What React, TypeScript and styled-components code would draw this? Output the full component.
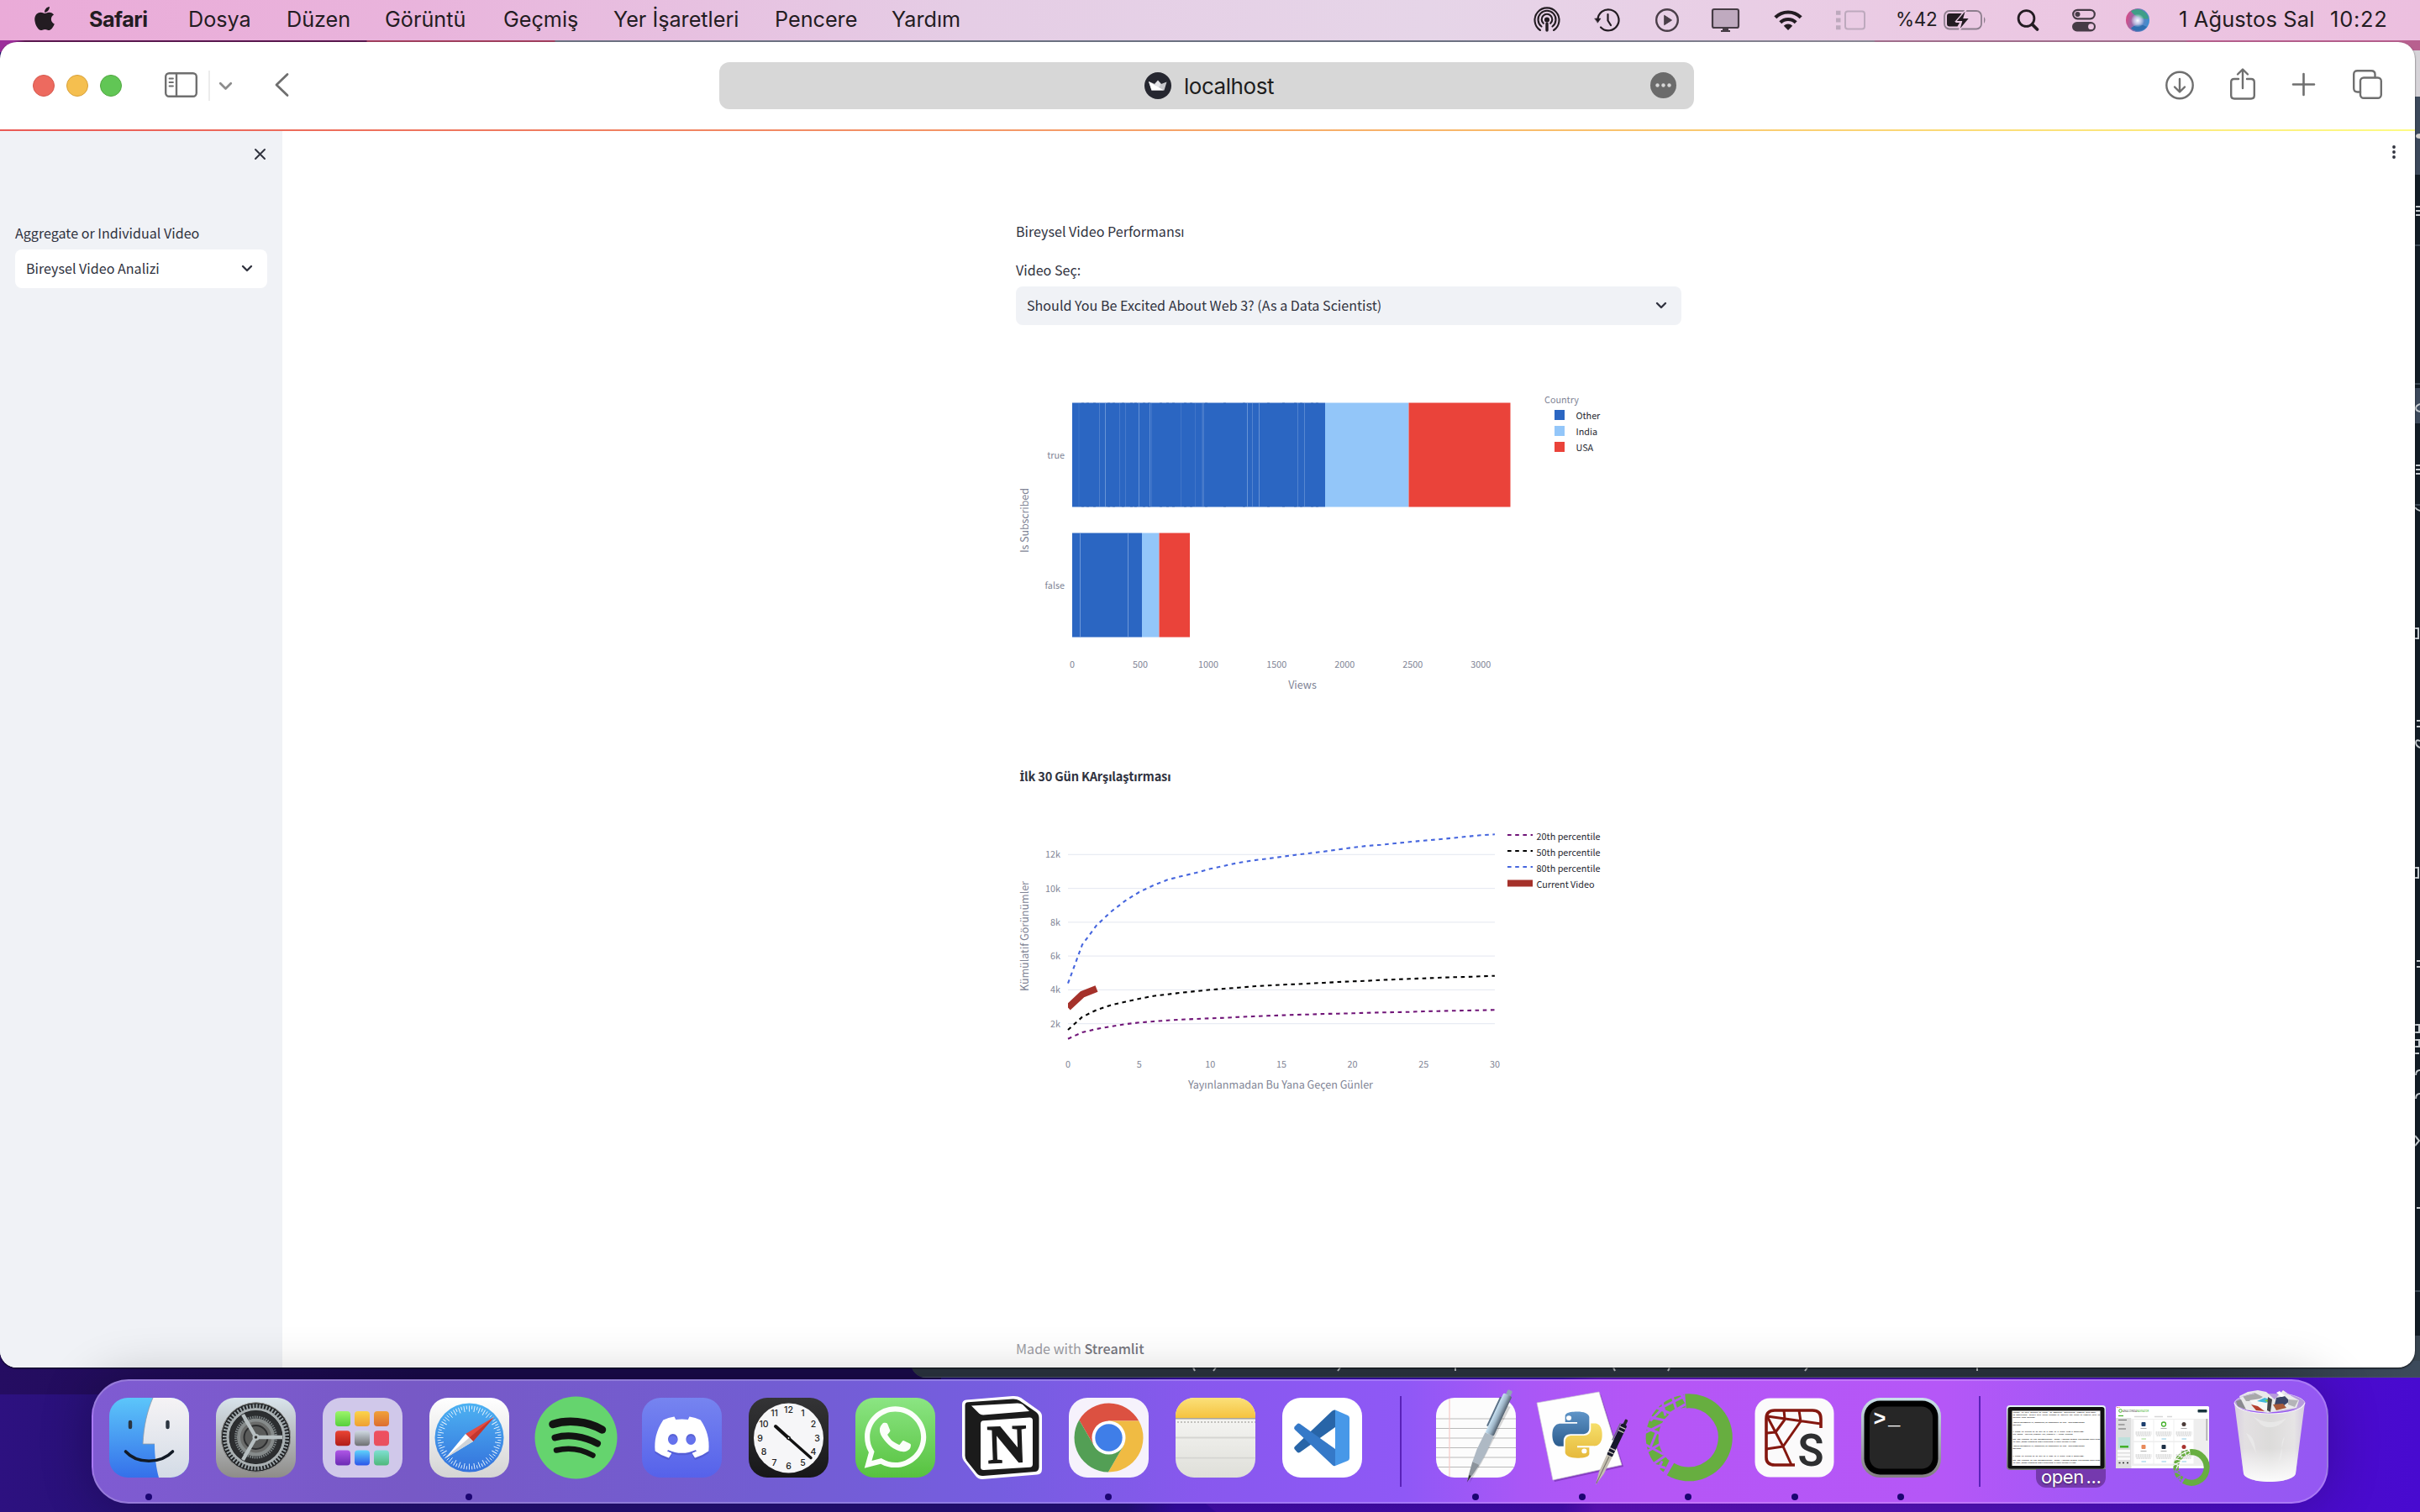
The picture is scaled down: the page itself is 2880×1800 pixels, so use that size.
import React from "react";
import styled, { createGlobalStyle } from "styled-components";
import { FaApple, FaDiscord, FaWhatsapp } from "react-icons/fa";

const sans = `"Noto Sans CJK JP", "Noto Sans", sans-serif`;
const system = `Inter, "Liberation Sans", sans-serif`;

const Global = createGlobalStyle`
  * { box-sizing: border-box; }
  html, body { margin: 0; padding: 0; }
  body { width: 2880px; height: 1800px; overflow: hidden; }
  svg { display: block; overflow: visible; flex-shrink: 0; }
`;

const Desktop = styled.div`
  position: relative;
  width: 2880px;
  height: 1800px;
  overflow: hidden;
  font-family: ${system};
  background:
    linear-gradient(40deg, transparent 0 49.9%, rgba(110, 20, 200, 0.25) 50% 66%, transparent 80%) 0 1786px / 2880px 14px no-repeat,
    linear-gradient(90deg, #2d1180 0, #231070 240px, #24107a 1340px, #350aa5 1400px, #360aa8 1860px, #5a10bc 1900px, #5212bc 2360px, #480ad0 2880px);
`;

/* ---------- menu bar ---------- */
const MenuBar = styled.header`
  position: relative;
  display: flex;
  height: 48px;
  padding-left: 37px;
  align-items: center;
  justify-content: space-between;
  color: #231c22;
  background: linear-gradient(90deg, #eaabd8 0, #e9b4dc 500px, #e5cde5 1150px, #e6d5e8 1700px, #ebc9e3 2350px, #ecbfdf 2880px);
`;
const MenuGroup = styled.nav`
  display: flex;
  align-items: center;
`;
const MenuItem = styled.span<{ $w: number; $bold?: boolean; $ls?: number }>`
  width: ${(p) => p.$w}px;
  font-size: 25.2px;
  line-height: 45px;
  height: 47px;
  white-space: nowrap;
  letter-spacing: ${(p) => p.$ls ?? 0}px;
  font-weight: ${(p) => (p.$bold ? 700 : 400)};
`;
const AppleSlot = styled.span`
  width: 69px;
  font-size: 32px;
  margin-top: -4px;
`;
const Tray = styled.div`
  display: flex;
  align-items: center;
  width: 1055px;
`;
const TrayItem = styled.div<{ $w: number }>`
  width: ${(p) => p.$w}px;
  flex-shrink: 0;
  height: 48px;
  display: flex;
  align-items: center;
`;
const TrayText = styled.span<{ $size: number; $ls?: number }>`
  font-size: ${(p) => p.$size}px;
  letter-spacing: ${(p) => p.$ls ?? 0}px;
  line-height: 46px;
  height: 48px;
  white-space: nowrap;
`;

/* ---------- windows ---------- */
const BackWindow = styled.div`
  position: absolute;
  left: 1084px;
  top: 60px;
  right: -40px;
  height: 1580px;
  border-radius: 18px;
  overflow: hidden;
  background: linear-gradient(180deg, #d6d3d8 0 55px, #3c495b 55px 148px, #121c25 148px 1530px, #37434f 1530px);
`;
const BackMarks = styled.svg`
  position: absolute;
  left: 1084px;
  top: 60px;
`;
const BackFoot = styled.div`
  position: absolute;
  left: 0;
  right: 0;
  bottom: 0;
  height: 20px;
  border-bottom: 1px solid #4a5260;
  background: linear-gradient(90deg, #2b3440 0, #2b343e 1500px, #3c4a5b 1790px);
`;
const TopEdge = styled.div`
  position: absolute;
  top: 48px;
  left: 0;
  right: 0;
  height: 14px;
  background: linear-gradient(90deg, #9c2d9a 0 16px, #5b1850 30px 436px, #a3405f 437px 660px, #6d7384 661px 1700px, #8e8a98 2230px, #a4708f 2232px 2600px, #b8608f 2604px);
`;
const NightShade = styled.div`
  position: absolute;
  top: 1600px;
  left: 0;
  width: 1120px;
  height: 60px;
  background: linear-gradient(90deg, #250d62, #190a4a 500px);
`;
const Window = styled.section`
  position: absolute;
  left: 0;
  top: 50px;
  width: 2874px;
  height: 1578px;
  border-radius: 20px;
  overflow: hidden;
  background: #fff;
  display: flex;
  flex-direction: column;
  box-shadow: 0 1px 2px rgba(0, 0, 0, 0.8);
`;
const Toolbar = styled.div`
  height: 104px;
  flex-shrink: 0;
  display: grid;
  grid-template-columns: 856px 1160px 1fr;
  align-items: center;
  color: #6f6f6f;
`;
const ToolLeft = styled.div`
  display: flex;
  align-items: center;
  padding-left: 39px;
`;
const Lights = styled.div`
  display: flex;
  gap: 14px;
  margin-right: 51px;
`;
const Light = styled.i<{ $c: string; $b: string }>`
  width: 26px;
  height: 26px;
  border-radius: 50%;
  background: ${(p) => p.$c};
  border: 1px solid ${(p) => p.$b};
`;
const ToolDivider = styled.i`
  width: 2px;
  height: 36px;
  background: #ececec;
  margin: 0 11px 0 13px;
`;
const Address = styled.div`
  height: 56px;
  border-radius: 12px;
  background: #d7d7d7;
  display: grid;
  grid-template-columns: 1fr auto 1fr;
  align-items: center;
  color: #1d1d1d;
`;
const Host = styled.div`
  display: flex;
  align-items: center;
  gap: 15px;
  grid-column: 2;
  padding-left: 6px;
  font-size: 26px;
  line-height: 55px;
  letter-spacing: -0.45px;
`;
const More = styled.span`
  justify-self: end;
  margin-right: 21px;
`;
const ToolRight = styled.div`
  display: flex;
  justify-content: flex-end;
  align-items: center;
  padding-right: 39px;
`;
const ToolIcon = styled.span<{ $ml: number }>`
  margin-left: ${(p) => p.$ml}px;
`;
const Rainbow = styled.div`
  height: 2px;
  flex-shrink: 0;
  background: linear-gradient(90deg, #ea5a56, #f49a68 43%, #f8ba6a 62%, #fdfb84);
`;
const Page = styled.div`
  flex: 1;
  display: grid;
  grid-template-columns: 336px 1fr;
  font-family: ${sans};
  color: #31333f;
`;
const Sidebar = styled.aside`
  background: #f0f2f6;
  padding: 0 18px;
  display: flex;
  flex-direction: column;
`;
const CloseRow = styled.div`
  display: flex;
  justify-content: flex-end;
  padding: 21px 2px 0 0;
  height: 105px;
`;
const Label = styled.label<{ $h: number; $gap: number }>`
  display: block;
  font-size: 16.1px;
  line-height: ${(p) => p.$h}px;
  height: ${(p) => p.$h}px;
  margin-bottom: ${(p) => p.$gap}px;
  white-space: nowrap;
`;
const Select = styled.div<{ $bg: string; $pr: number }>`
  height: 46px;
  border-radius: 8px;
  background: ${(p) => p.$bg};
  display: flex;
  align-items: center;
  justify-content: space-between;
  padding: 0 ${(p) => p.$pr}px 1px 13px;
  font-size: 16.1px;
  line-height: 45px;
  white-space: nowrap;
`;
const Main = styled.main`
  display: grid;
  grid-template-columns: 873px 792px 1fr;
`;
const Column = styled.div`
  grid-column: 2;
  display: flex;
  flex-direction: column;
  padding-top: 105px;
`;
const ChartSlot = styled.figure<{ $mt: number }>`
  margin: ${(p) => p.$mt}px 0 0;
`;
const Kebab = styled.div`
  justify-self: end;
  padding: 17px 22px 0 0;
`;
const Footer = styled.footer`
  margin-top: auto;
  height: 45px;
  font-size: 16.1px;
  line-height: 45px;
  color: #9c9ca3;
  white-space: nowrap;
  b { font-weight: 500; color: #77777f; }
`;

/* ---------- dock ---------- */
const Dock = styled.div`
  position: absolute;
  left: 109px;
  top: 1642px;
  width: 2662px;
  height: 148px;
  border-radius: 44px;
  display: flex;
  padding: 0 0 0 3px;
  border: 2px solid rgba(255, 255, 255, 0.2);
  background: linear-gradient(90deg, #7f5bd2 0, #7759c6 380px, #725dd2 800px, #765de0 1080px, #8858ee 1320px, #8f58f6 1560px, #a957f6 1700px, #b556f6 1850px, #b557f7 2200px, #a058f6 2400px, #9458f2 2662px);
  box-shadow: 0 0 62px rgba(0, 0, 0, 0.24);
`;
const DockItem = styled.div<{ $w: number; $top?: number }>`
  width: ${(p) => p.$w}px;
  flex-shrink: 0;
  display: flex;
  flex-direction: column;
  align-items: center;
  padding-top: ${(p) => p.$top ?? 19.5}px;
`;
const Dot = styled.i`
  width: 8px;
  height: 8px;
  border-radius: 50%;
  background: #1c0572;
  margin-top: 19px;
`;
const DockRule = styled.i<{ $w: number; $x: number }>`
  width: ${(p) => p.$w}px;
  flex-shrink: 0;
  margin-top: 18px;
  height: 108px;
  background: linear-gradient(#5a22b8, #5a22b8) ${(p) => p.$x}px 0 / 2px 108px no-repeat;
`;
const Tag = styled.span`
  margin-top: -1px;
  margin-left: 36px;
  width: 83px;
  height: 22px;
  border-radius: 0 0 12px 12px;
  background: #7539ae;
  color: #fff;
  font-size: 22px;
  line-height: 19px;
  text-align: center;
  letter-spacing: -0.4px;
  word-spacing: -3px;
  text-shadow: 0 1px 2px rgba(0, 0, 0, 0.5);
`;

const Chevron = ({ w = 12, c = "#31333f", s = 2.4 }: { w?: number; c?: string; s?: number }) => (
  <svg width={w} height={w * 0.6} viewBox="0 0 12 7.2" fill="none" stroke={c} strokeWidth={s} strokeLinecap="round" strokeLinejoin="round">
    <path d="M1 1 6 6 11 1" />
  </svg>
);
const BackIcon = styled.svg`
  margin: -2px 0 0 51px;
`;
const Raised = styled.svg<{ $by: number }>`
  margin-top: -${(p) => p.$by}px;
`;

/* ---------- charts ---------- */
const Tick = styled.text`
  font-family: ${sans};
  font-size: 10.8px;
  fill: #808495;
`;
const AxisTitle = styled.text`
  font-family: ${sans};
  font-size: 12.6px;
  fill: #808495;
`;
const LegendText = styled.text`
  font-family: ${sans};
  font-size: 10.8px;
  fill: #262730;
`;
const ChartTitle = styled.text`
  font-family: ${sans};
  font-size: 14.6px;
  font-weight: 700;
  fill: #31333f;
`;
const DottedCapital = styled.tspan`
  font-family: "Noto Sans", sans-serif;
`;

const stripes = [
  [1284, 0.15], [1308.5, 0.3], [1315.5, 0.55], [1332.5, 0.25], [1339.5, 0.25], [1355.5, 0.55], [1368.5, 0.5], [1370.5, 0.2],
  [1405.5, 0.2], [1422.5, 0.2], [1432, 0.5], [1430.5, 0.15], [1484.5, 0.55], [1490.5, 0.35], [1498.5, 0.55], [1544.5, 0.35], [1552.5, 0.4],
];
const fringe = [1287, 1293, 1301, 1318, 1324, 1335, 1345, 1350, 1360, 1366, 1380, 1388, 1395, 1409, 1416, 1434, 1456, 1479, 1508, 1526, 1540, 1547, 1560, 1566];

const BarChart = () => (
  <svg width={792} height={470} viewBox="1209 400 792 470">
    <g fill="#2b66c2">
      <rect x={1276} y={479.5} width={301} height={124} />
      <rect x={1276} y={634.5} width={83} height={124} />
    </g>
    {stripes.map(([x, o]) => (
      <rect key={x} x={x - 0.5} y={480} width={1} height={123} fill="#9bb9e6" opacity={o} />
    ))}
    {fringe.map((x) => (
      <path key={x} d={`M${x} 479.8h3M${x} 603.2h3`} stroke="#1c4f9f" strokeWidth={0.8} opacity={0.5} />
    ))}
    {[1285.5, 1342.5].map((x) => (
      <rect key={x} x={x - 0.5} y={635} width={1} height={123} fill="#9bb9e6" opacity={0.6} />
    ))}
    <g fill="#93c6f9">
      <rect x={1577} y={479.5} width={99.5} height={124} />
      <rect x={1359} y={634.5} width={20.5} height={124} />
    </g>
    <g fill="#ea433a">
      <rect x={1676.5} y={479.5} width={121} height={124} />
      <rect x={1379.5} y={634.5} width={36.5} height={124} />
    </g>
    {[0, 500, 1000, 1500, 2000, 2500, 3000].map((v) => (
      <Tick key={v} x={1276 + v * 0.1621} y={795} textAnchor="middle">{v}</Tick>
    ))}
    <Tick x={1267} y={546} textAnchor="end">true</Tick>
    <Tick x={1267} y={701} textAnchor="end">false</Tick>
    <AxisTitle x={1550} y={820} textAnchor="middle">Views</AxisTitle>
    <AxisTitle transform="translate(1223.5 619.5) rotate(-90)" textAnchor="middle" textLength={77}>Is Subscribed</AxisTitle>
    <Tick x={1838} y={480}>Country</Tick>
    {[["Other", "#2b66c2"], ["India", "#93c6f9"], ["USA", "#ea433a"]].map(([t, c], i) => (
      <g key={t}>
        <rect x={1850} y={488 + i * 19} width={12} height={12} fill={c} />
        <LegendText x={1875.5} y={499 + i * 19}>{t}</LegendText>
      </g>
    ))}
  </svg>
);

const curve80 = [872, 734, 665, 617, 578, 546, 522, 502, 489, 477, 463, 452, 441, 433, 427, 420, 413, 407, 401, 394, 387, 381, 377, 372, 367, 362, 358, 353, 348, 343, 340];
const curve50 = [1038, 992, 967, 950, 938, 927, 917, 911, 905, 900, 895, 891, 887, 883, 880, 877, 875, 872, 870, 867, 865, 863, 860, 858, 856, 854, 852, 850, 849, 847, 845];
const curve20 = [1070, 1047, 1035, 1026, 1018, 1012, 1008, 1004, 1001, 999, 997, 995, 992, 990, 988, 986, 984, 983, 981, 980, 979, 977, 976, 975, 974, 972, 971, 970, 969, 968, 967];
const toPath = (ys: number[]) => ys.map((y, i) => `${i ? "L" : "M"}${(1271 + i * 16.93).toFixed(1)} ${(880 + y / 3).toFixed(1)}`).join("");
const series = [
  { name: "20th percentile", color: "#701578", ys: curve20 },
  { name: "50th percentile", color: "#000000", ys: curve50 },
  { name: "80th percentile", color: "#4666de", ys: curve80 },
];

const LineChart = () => (
  <svg width={792} height={440} viewBox="1209 880 792 440">
    <defs>
      <clipPath id="plot"><rect x={1271} y={960} width={508} height={300} /></clipPath>
    </defs>
    <ChartTitle x={1213.5} y={930} textLength={180}><DottedCapital>İ</DottedCapital>lk 30 Gün KArşılaştırması</ChartTitle>
    {[2, 4, 6, 8, 10, 12].map((k) => (
      <g key={k}>
        <rect x={1271} y={1258.3 - k * 20.13} width={508} height={1.2} fill="#e8ebf3" />
        <Tick x={1262} y={1263 - k * 20.13} textAnchor="end">{k}k</Tick>
      </g>
    ))}
    {[0, 5, 10, 15, 20, 25, 30].map((d) => (
      <Tick key={d} x={1271 + d * 16.93} y={1270.7} textAnchor="middle">{d}</Tick>
    ))}
    {series.map((s, i) => (
      <g key={s.name} fill="none" stroke={s.color} strokeWidth={2.1}>
        <path d={toPath(s.ys)} strokeDasharray="4.6 4.6" />
        <path d={`M1794 ${994 + i * 19}h30`} strokeDasharray="4.6 4.6" />
        <LegendText x={1828.5} y={1000 + i * 19} stroke="none" textLength={76}>{s.name}</LegendText>
      </g>
    ))}
    <g stroke="#a5312a" strokeWidth={8} fill="none">
      <path d="M1271 1199.6 1288 1183.8 1305 1177" clipPath="url(#plot)" />
      <path d="M1794 1051.5h30" />
    </g>
    <LegendText x={1828.5} y={1057} textLength={69}>Current Video</LegendText>
    <AxisTitle x={1524} y={1295.7} textAnchor="middle" textLength={220}>Yayınlanmadan Bu Yana Geçen Günler</AxisTitle>
    <AxisTitle transform="translate(1223.5 1114.5) rotate(-90)" textAnchor="middle" textLength={131}>Kümülatif Görünümler</AxisTitle>
  </svg>
);

/* ---------- dock icons, 95x95 each ---------- */
const Icon = ({ children }: { children: React.ReactNode }) => (
  <svg width={95} height={95} viewBox="0 0 95 95">{children}</svg>
);
const Grad = ({ id, a, b }: { id: string; a: string; b: string }) => (
  <linearGradient id={id} x1="0" y1="0" x2="0" y2="1">
    <stop offset="0" stopColor={a} />
    <stop offset="1" stopColor={b} />
  </linearGradient>
);
const Tile = ({ fill }: { fill: string }) => <rect width={95} height={95} rx={22} fill={fill} />;

const Finder = () => (
  <Icon>
    <defs>
      <Grad id="fa" a="#5cc6fa" b="#3570ea" />
      <Grad id="fb" a="#f5f3f5" b="#d3dbe6" />
      <clipPath id="fc"><rect width={95} height={95} rx={22} /></clipPath>
    </defs>
    <g clipPath="url(#fc)">
      <rect width={95} height={95} fill="url(#fa)" />
      <path d="M52 0C45 16 41 34 40 55H54C54 70 56 84 59 95H95V0Z" fill="url(#fb)" />
    </g>
    <path d="M52 0C45 16 41 34 40 55H54" fill="none" stroke="#8d9ba8" strokeWidth={0.8} />
    <path d="M25 29v6M69.5 29v6" stroke="#2b3540" strokeWidth={4.4} strokeLinecap="round" />
    <path d="M19.5 64C33 79 61 79 75.5 64" fill="none" stroke="#121a26" strokeWidth={3.6} strokeLinecap="round" />
  </Icon>
);
const Settings = () => (
  <Icon>
    <defs><Grad id="sa" a="#d9e4ec" b="#8e8c89" /></defs>
    <Tile fill="url(#sa)" />
    <circle cx={47.5} cy={47} r={41.5} fill="#202224" />
    <circle cx={47.5} cy={47} r={37} fill="none" stroke="#9aa3a7" strokeWidth={5} strokeDasharray="1.9 1.97" />
    <circle cx={47.5} cy={47} r={33.5} fill="none" stroke="#a9b0b2" strokeWidth={3.2} />
    <circle cx={47.5} cy={47} r={41.2} fill="none" stroke="#a8a8a6" strokeWidth={0.8} />
    <circle cx={47.5} cy={47} r={31.5} fill="#2c2e30" />
    <circle cx={47.5} cy={47} r={24} fill="none" stroke="#7d8486" strokeWidth={3} strokeDasharray="1.5 1.2" />
    <circle cx={47.5} cy={47} r={20.5} fill="#6a6b6a" stroke="#868b8b" strokeWidth={4} />
    <circle cx={47.5} cy={47} r={14} fill="#5a5b5a" stroke="#2c2d2e" strokeWidth={2} />
    <path d="M47.5 47H79M47.5 47 32 20M47.5 47 32 74" stroke="#b7bfc1" strokeWidth={4.4} />
    <circle cx={47.5} cy={47} r={4} fill="#b7bfc1" />
    <circle cx={47.5} cy={47} r={1.8} fill="#333" />
  </Icon>
);
const pads = [["#9cf56a", "#56cf3c"], ["#fbd44a", "#ef9f31"], ["#f0a13a", "#dc6d30"], ["#ea4434", "#b01d18"], ["#cfd9e2", "#6e6f72"], ["#ef4f60", "#e8505f"], ["#b057e6", "#6b2bb4"], ["#5fd4fb", "#2b55ea"], ["#7fe0d2", "#4fb87c"]];
const Launchpad = () => (
  <Icon>
    <Tile fill="#d0c8ea" />
    {pads.map(([a, b], i) => (
      <g key={i}>
        <defs><Grad id={`lp${i}`} a={a} b={b} /></defs>
        <rect x={15 + (i % 3) * 23} y={16 + Math.floor(i / 3) * 23.2} width={18} height={18} rx={4} fill={`url(#lp${i})`} />
      </g>
    ))}
  </Icon>
);
const Safari = () => (
  <Icon>
    <defs><Grad id="sfa" a="#ffffff" b="#d4d4d4" /><Grad id="sfb" a="#4db2f2" b="#3472dc" /></defs>
    <Tile fill="url(#sfa)" />
    <circle cx={47.5} cy={47.5} r={41} fill="url(#sfb)" />
    {Array.from({ length: 72 }, (_, i) => (
      <path key={i} d={i % 2 ? "M47.5 9.5v4" : "M47.5 9.5v7"} stroke="#e6f2fd" strokeWidth={0.9} transform={`rotate(${i * 5} 47.5 47.5)`} />
    ))}
    <path d="M77 23 43 43 52 52Z" fill="#e24b41" />
    <path d="M77 23 47.5 47.5 52 52Z" fill="#c2372f" />
    <path d="M19 72 43 43 52 52Z" fill="#fff" />
    <path d="M19 72 47.5 47.5 52 52Z" fill="#cfd3d8" />
  </Icon>
);
const Spotify = () => (
  <Icon>
    <circle cx={47.5} cy={47.5} r={49} fill="#65d46e" />
    <g fill="none" stroke="#121412" strokeLinecap="round">
      <path d="M20 31.500C37 26 61 27.500 78.500 38" strokeWidth={9.500} />
      <path d="M22.500 47.500C38 43 57 45.500 73 54.500" strokeWidth={8} />
      <path d="M24 62.500C38 59 53 60.500 67.500 68.500" strokeWidth={6.500} />
    </g>
  </Icon>
);
const Discord = () => (
  <Icon>
    <defs><Grad id="da" a="#7684f0" b="#5662ea" /></defs>
    <Tile fill="url(#da)" />
    <FaDiscord x={12.5} y={14.5} size={70} color="rgba(50,50,150,.25)" />
    <FaDiscord x={12.5} y={12} size={70} color="#fff" />
  </Icon>
);
const Clock = () => (
  <Icon>
    <defs><Grad id="ca" a="#343436" b="#171719" /></defs>
    <Tile fill="url(#ca)" />
    <circle cx={47.5} cy={48} r={41.5} fill="#f6f6f8" />
    {Array.from({ length: 12 }, (_, i) => {
      const a = ((i + 1) * Math.PI) / 6;
      return (
        <text key={i} x={47.5 + 34 * Math.sin(a)} y={51.5 - 33.5 * Math.cos(a)} fontSize={10.5} fontWeight={500} fontFamily="Inter, sans-serif" textAnchor="middle" fill="#222">{i + 1}</text>
      );
    })}
    <path d="M32 34 47.5 48" stroke="#111" strokeWidth={4} strokeLinecap="round" />
    <path d="M47.5 48 74 71.5" stroke="#111" strokeWidth={3.4} strokeLinecap="round" />
    <circle cx={47.5} cy={48} r={2.4} fill="#111" />
    <circle cx={47.5} cy={48} r={0.9} fill="#fff" />
  </Icon>
);
const WhatsApp = () => (
  <Icon>
    <defs><Grad id="wa" a="#8be583" b="#57c23f" /></defs>
    <Tile fill="url(#wa)" />
    <FaWhatsapp x={5.5} y={5} size={84} color="#fbfffa" />
  </Icon>
);
const Notion = () => (
  <Icon>
    <path d="M0 8Q0 3 5 2.500L60-2Q66-2.500 70 0L91 15Q95 18 95 22V85Q95 91 89 91.500L24 97Q19 97 16 93L2 75Q0 72 0 69Z" fill="#fff" />
    <path d="M3.500 9Q3.500 5.500 7 5.200L60 1.500Q65 1.200 68 3.300L88 17Q91.500 19.500 91.500 24V82Q91.500 87.500 87 88L25 93Q20 93.300 17.500 90L5.500 75Q3.500 72 3.500 69Z" fill="#1b1b1b" />
    <path d="M11 9.500 66 6.500Q70 6.500 72 8L80 16 25 20.500Q22 20.500 20 18.500Z" fill="#fff" />
    <path d="M22 31Q22 27.500 25.500 27.200L80 23.500Q84 23.200 84 27V79Q84 82.500 80.500 82.800L26 86Q22 86.200 22 82.500Z" fill="#fff" />
    <text x={53.5} y={77} transform="rotate(-2 53 55)" fontSize={65} fontWeight={700} fontFamily="Liberation Serif, serif" textAnchor="middle" fill="#1b1b1b" stroke="#1b1b1b" strokeWidth={1.4}>N</text>
  </Icon>
);
const Chrome = () => (
  <Icon>
    <Tile fill="#f6f2fc" />
    <g transform="translate(47.5 47.5)">
      <path d="M0 0-17.3 10-35.200-21A41 41 0 0 1 35.800-20H0Z" fill="#dc5141" />
      <path d="M0 0V-20H35.800A41 41 0 0 1-.6 41L17.300 10Z" fill="#f0bb43" />
      <path d="M0 0 17.300 10-.6 41A41 41 0 0 1-35.200-21L-17.300 10Z" fill="#539f55" />
      <circle r={20} fill="#fff" />
      <circle r={16.2} fill="#3f7ee8" />
    </g>
  </Icon>
);
const Notes = () => (
  <Icon>
    <defs>
      <Grad id="na" a="#fbe07a" b="#f5c33f" />
      <Grad id="nb" a="#fbfbfa" b="#dfdfd9" />
      <clipPath id="nc"><rect width={95} height={95} rx={22} /></clipPath>
    </defs>
    <g clipPath="url(#nc)">
      <rect width={95} height={95} fill="url(#nb)" />
      <rect width={95} height={24} fill="url(#na)" />
      <path d="M0 24.8H95" stroke="#a8a49a" strokeWidth={1.6} />
      <path d="M2 29H95" stroke="#c2c1bd" strokeWidth={2} strokeDasharray="2 2" />
      <path d="M0 47.5H95M0 71.7H95" stroke="#d5d5d2" strokeWidth={1.8} />
    </g>
  </Icon>
);
const VSCode = () => (
  <Icon>
    <Tile fill="#fff" />
    <path d="M14.5 61Q13.5 59.5 15 58L59 16Q61 14 63 14.5V35L21 65Q19 66 17.5 64.5Z" fill="#2865a8" />
    <path d="M14.5 34.5 17.5 31.5Q19 30 21 31L63 61V81Q61 82 59 79.5L15 38Q13.5 36.5 14.5 34.5Z" fill="#3579c8" />
    <path d="M63 14.5 78 21Q80 22 80 24V72Q80 74 78 75L63 81Z" fill="#4798e8" />
  </Icon>
);
const TextEdit = () => (
  <Icon>
    <defs>
      <clipPath id="tc"><rect width={95} height={95} rx={22} /></clipPath>
      <linearGradient id="tp" x1="0" x2="1"><stop offset="0" stopColor="#c9e3f4" /><stop offset=".5" stopColor="#9db4c6" /><stop offset="1" stopColor="#4f5d6b" /></linearGradient>
    </defs>
    <Tile fill="#fcfcfc" />
    <g clipPath="url(#tc)">
      <path d="M0 25H95M0 36.5H95M0 48H95M0 59.5H95M0 71H95M0 82.5H95" stroke="#b9b9b9" strokeWidth={1.2} />
      <path d="M16 0V95" stroke="#f6c9c7" strokeWidth={1.2} />
    </g>
    <g transform="translate(88 -9) rotate(25)">
      <path d="M-5 16-3 90 0 119 3 90 6 16Z" fill="rgba(0,0,0,.15)" transform="translate(3 2)" />
      <rect x={-2.5} y={0} width={6} height={9} rx={1.5} fill="#8fa5b7" />
      <rect x={-5.5} y={6} width={11} height={52} rx={2} fill="url(#tp)" />
      <path d="M-6.5 12V50" stroke="#5a7187" strokeWidth={2} />
      <path d="M-5.5 58H5.5L6 80 4.5 96H-4.5L-6 80Z" fill="#aeb9c4" />
      <path d="M-4.5 96H4.5L1 118H-1Z" fill="#8c949c" />
      <path d="M-1 112H1L0 121Z" fill="#222" />
    </g>
  </Icon>
);
const PythonLauncher = () => (
  <Icon>
    <defs><Grad id="pa" a="#5f95c8" b="#2c5c8e" /><Grad id="pb" a="#f6df6a" b="#e6b93c" /></defs>
    <path d="M-4.5 9 70-4 97 82 15 100Z" fill="rgba(40,0,80,.3)" />
    <path d="M-6 6 68-7 95 80 13 98Z" fill="#fefefe" stroke="#c9c6d0" strokeWidth={0.7} />
    <g transform="translate(12.5 16.5) scale(2.46 2.3)">
      <path fill="url(#pa)" d="M14.25.18l.9.2.73.26.59.3.45.32.34.34.25.34.16.33.1.3.04.26.02.2-.01.13V8.5l-.05.63-.13.55-.21.46-.26.38-.3.31-.33.25-.35.19-.35.14-.33.1-.3.07-.26.04-.21.02H8.77l-.69.05-.59.14-.5.22-.41.27-.33.32-.27.35-.2.36-.15.37-.1.35-.07.32-.04.27-.02.21v3.06H3.17l-.21-.03-.28-.07-.32-.12-.35-.18-.36-.26-.36-.36-.35-.46-.32-.59-.28-.73-.21-.88-.14-1.05-.05-1.23.06-1.22.16-1.04.24-.87.32-.71.36-.57.4-.44.42-.33.42-.24.4-.16.36-.1.32-.05.24-.01h.16l.06.01h8.16v-.83H6.18l-.01-2.75-.02-.37.05-.34.11-.31.17-.28.25-.26.31-.23.38-.2.44-.18.51-.15.58-.12.64-.1.71-.06.77-.04.84-.02 1.27.05z" />
      <path fill="url(#pb)" d="M21.04 6.11l.28.06.32.12.35.18.36.27.36.35.35.47.32.59.28.73.21.88.14 1.04.05 1.23-.06 1.23-.16 1.04-.24.86-.32.71-.36.57-.4.45-.42.33-.42.24-.4.16-.36.09-.32.05-.24.02-.16-.01h-8.22v.82h5.84l.01 2.76.02.36-.05.34-.11.31-.17.29-.25.25-.31.24-.38.2-.44.17-.51.15-.58.13-.64.09-.71.07-.77.04-.84.01-1.27-.04-1.07-.14-.9-.2-.73-.25-.59-.3-.45-.33-.34-.34-.25-.34-.16-.33-.1-.3-.04-.25-.02-.2.01-.13v-5.34l.05-.64.13-.54.21-.46.26-.38.3-.32.33-.24.35-.2.35-.14.33-.1.3-.06.26-.04.21-.02.13-.01h5.84l.69-.05.59-.14.5-.21.41-.28.33-.32.27-.35.2-.36.15-.36.1-.35.07-.32.04-.28.02-.21V6.07h2.09l.14.01z" />
      <circle cx={7.95} cy={3.3} r={1.25} fill="#fff" />
      <circle cx={15.4} cy={20.4} r={1.25} fill="#fff" />
    </g>
    <g transform="translate(101 26) rotate(25.5) scale(.9 .78)">
      <rect x={-2} y={0} width={4} height={9} rx={1.5} fill="#26262c" />
      <rect x={-4} y={8} width={8} height={54} rx={2.5} fill="#16182a" />
      <path d="M-4 14H4M-4 20H4M-4 50H4M-4 56H4" stroke="#c9c6bd" strokeWidth={1.8} />
      <path d="M-5.5 9V38" stroke="#6d6c80" strokeWidth={1.5} />
      <path d="M-4 61H4L3.5 90 0 110-3.5 90Z" fill="#c4bfb1" />
      <path d="M0 63V108" stroke="#77736a" strokeWidth={1.2} />
    </g>
  </Icon>
);
const RingArt = ({ id }: { id: string }) => (
  <>
    <defs>
      <mask id={id} maskUnits="userSpaceOnUse" x="-60" y="-60" width="120" height="120">
        <rect x={-60} y={-60} width={120} height={120} fill="#fff" />
        <g stroke="#000" strokeWidth={3} fill="none">
          <path d="M-56-14-28-2M-56-4-28-18M-56 6-30 20M-56 20-28 4M-52 30-28 36M-52 38-26 20M-46-20-30-36M-54-26-26-20M-44-38-20-28M-34-52-28-26M-22-56-14-30M-36-34-4-50M-24-28-4-40M-12-56 0-36" />
          <path d="M-42 50-32 28M-46 12-38-8M-34 52-22 28" />
        </g>
        <circle r={34} fill="none" stroke="#000" strokeWidth={2} strokeDasharray="5 9" />
      </mask>
    </defs>
    <path d="M-4-43.500A43.500 43.500 0 1 1-22 37.500" fill="none" stroke="#67ae40" strokeWidth={17} />
    <path d="M-5-43.500A43.500 43.500 0 0 0-26 34.900" fill="none" stroke="#67ae40" strokeWidth={15} mask={`url(#${id})`} />
  </>
);
const Anaconda = () => (
  <Icon><g transform="translate(48 47.5)"><RingArt id="ring1" /></g></Icon>
);
const Spyder = () => (
  <Icon>
    <rect x={0.5} y={0.5} width={94} height={94} rx={18} fill="#fbfafb" />
    <g fill="none" stroke="#84170f" strokeWidth={3.6} strokeLinejoin="round">
      <path d="M79 36V25Q79 15 69 15H24Q14 15 14 25V71Q14 80 24 80H48" />
      <path d="M15 22 79 31M15 22 34 58 44 80M14 61 34 58 55 28M35 15 36 25M53 15 55 28M36 26 25 41 15 42" strokeWidth={3} />
    </g>
    <text x={67} y={80.5} fontSize={54} fontWeight={600} fontFamily="Roboto, sans-serif" textAnchor="middle" fill="#2e2f31" textLength={31} lengthAdjust="spacingAndGlyphs">S</text>
  </Icon>
);
const Terminal = () => (
  <Icon>
    <defs><Grad id="ta" a="#c9e0ea" b="#827d80" /></defs>
    <Tile fill="url(#ta)" />
    <rect x={3.5} y={3.5} width={88} height={88} rx={19} fill="#000" />
    <rect x={10} y={10.5} width={75} height={74} rx={13} fill="#262626" />
    <text x={14.5} y={33} fontSize={25} fontWeight={700} fontFamily="Liberation Mono, monospace" fill="#fff">&gt;</text>
    <text x={32} y={32} fontSize={24} fontWeight={700} fontFamily="Liberation Mono, monospace" fill="#fff">_</text>
  </Icon>
);

const termLines = [
  "reason, it will default to False. In addition, specifying 'numeric_only=None'",
  "is deprecated. Select only valid columns or specify the value of numeric_only to",
  "silence this warning.", "",
  "/Users/Documents/YT_Dashboard_St/Dashboard.py:106: SettingWithCopy", "Warning:", "", "",
  "A value is trying to be set on a copy of a slice from a DataFrame.",
  "Try using .loc[row_indexer,col_indexer] = value instead", "",
  "See the caveats in the documentation: https://pandas.pydata.org/pandas-docs/stab",
  "le/user_guide/indexing.html#returning-a-view-versus-a-copy", "",
  "/Users/Documents/YT_Dashboard_St/Dashboard.py:108: SettingWithCopy", "Warning:", "", "",
  "A value is trying to be set on a copy of a slice from a DataFrame.", "",
  "See the caveats in the documentation: https://pandas.pydata.org/pandas-docs/stab",
  "le/user_guide/indexing.html#returning-a-view-versus-a-copy",
];
const TerminalThumb = () => (
  <svg width={118} height={77} viewBox="0 0 118 77">
    <defs><Grad id="tta" a="#e6f5f8" b="#777a78" /></defs>
    <rect width={118} height={77} rx={4} fill="url(#tta)" />
    <rect x={1.5} y={2} width={115} height={73.5} rx={3} fill="#111" />
    <rect x={6.5} y={6.5} width={105} height={65.5} fill="#fff" />
    {termLines.map((t, i) => (
      <text key={i} x={7.5} y={9.3 + i * 2.85} fontSize={2.17} fontWeight={700} fontFamily="Liberation Mono, monospace" fill="#111">{t}</text>
    ))}
  </svg>
);
const cards = ["#1d3f6e", "#43b02a", "#4a3b38", "#e88a5a", "#1d2f45", "#a8332f"];
const NavigatorThumb = () => (
  <svg width={111} height={74} viewBox="0 0 111 74">
    <rect width={111} height={74} rx={1.5} fill="#fff" />
    <rect y={14} width={18.5} height={60} fill="#dedede" />
    <rect x={18.5} y={14} width={92} height={57} fill="#eeeeee" />
    <rect x={18.5} y={9} width={92.5} height={6} fill="#fff" />
    <circle cx={1.8} cy={1.5} r={0.7} fill="#ea5f5c" /><circle cx={4} cy={1.5} r={0.7} fill="#f2b94b" />
    <circle cx={5.5} cy={5.5} r={1.8} fill="none" stroke="#43b02a" strokeWidth={1} />
    <text x={8} y={7} fontSize={4} fontFamily="Roboto, sans-serif" fill="#555" textLength={17} lengthAdjust="spacingAndGlyphs">ANACONDA</text>
    <text x={25} y={7} fontSize={4} fontFamily="Roboto, sans-serif" fill="#43b02a" textLength={14} lengthAdjust="spacingAndGlyphs">NAVIGATOR</text>
    <rect x={97.5} y={4} width={11} height={3.5} rx={0.8} fill="#1a3540" />
    <path d="M22 12.5H38M46 12.5H56M61 12.5H67" stroke="#d6d6d6" strokeWidth={1.6} />
    <path d="M3 11.5H9" stroke="#43b02a" strokeWidth={1.2} />
    <path d="M3 16.5H13M3 22H10.5M3 27H12" stroke="#6a6a6a" strokeWidth={1} />
    <rect x={3} y={37} width={14} height={13} fill="#bfe0dc" /><rect x={5} y={47} width={10} height={2.5} fill="#43b02a" />
    <path d="M2 53.5H17M2 58H17M2 62.5H17" stroke="#fafafa" strokeWidth={3} />
    <path d="M3.5 67.5h2M8 67.5h2M13 67.5h2" stroke="#333" strokeWidth={1.5} />
    {cards.map((c, i) => {
      const x = 21.5 + (i % 3) * 24;
      const y = 16 + Math.floor(i / 3) * 27;
      return (
        <g key={i}>
          <rect x={x} y={y} width={23} height={25.5} fill="#fff" />
          {i === 1 ? <circle cx={x + 11.5} cy={y + 5.5} r={2.5} fill="none" stroke={c} strokeWidth={1.3} /> : <rect x={x + 9} y={y + 3} width={5} height={5} rx={i % 3 === 2 ? 2.5 : 1} fill={c} />}
          <path d={`M${x + 8} ${y + 10.5}h7`} stroke="#888" strokeWidth={0.7} />
          <path d={`M${x + 2} ${y + 15}h19M${x + 2} ${y + 17}h19M${x + 3} ${y + 19}h17`} stroke="#b5b5b5" strokeWidth={0.8} strokeDasharray="2 .6" />
          <rect x={x + 9} y={y + 22} width={5.5} height={2} fill={i === 0 ? "#cdebc5" : "#c5e4f2"} />
        </g>
      );
    })}
    <rect x={107.5} y={15} width={1.5} height={26} fill="#aaa" />
    <g transform="translate(90 73) scale(.42)"><RingArt id="ring2" /></g>
  </svg>
);
const Trash = () => (
  <svg width={84} height={110} viewBox="0 0 84 110">
    <defs>
      <linearGradient id="tra" x1="0" x2="1">
        <stop offset="0" stopColor="#d8cfe0" /><stop offset=".15" stopColor="#e3e0e2" /><stop offset=".5" stopColor="#dcdbda" /><stop offset=".85" stopColor="#e6e4e5" /><stop offset="1" stopColor="#d5cbe0" />
      </linearGradient>
      <Grad id="trb" a="rgba(255,255,255,0)" b="#fbfbfb" />
    </defs>
    <ellipse cx={42} cy={16} rx={42} ry={11} fill="#b79bdd" />
    <path d="M6 8 16 3 28 1 38 3 48 12 58 1 68 8 77 13 74 22 40 28 12 24Z" fill="#e9e9ea" />
    <path d="M10 8 24 4 34 9 26 14 14 14Z" fill="#a8a8aa" />
    <path d="M18 13 32 11 44 9 40 25 28 24Z" fill="#f7f7f7" />
    <path d="M27 14 36 10 43 12 38 16Z" fill="#3fb8dc" /><path d="M36 13 43 11 42 17Z" fill="#7fd04c" />
    <path d="M20 18 28 20 36 26 26 25Z" fill="#b5402f" />
    <path d="M40 9 45 12 43 27 39 25Z" fill="#47474b" />
    <path d="M50 10 60 8 66 14 58 20 48 18Z" fill="#3b4668" /><path d="M46 18 58 17 62 22 50 25Z" fill="#a85a3a" />
    <path d="M50 4 54 2 60 8 56 9Z" fill="#fff" /><path d="M64 12 76 13 72 21 64 18Z" fill="#b4b4b8" />
    <path d="M8 12 2 14 4 20 14 24Z" fill="#8a8a90" />
    <path d="M0 16C2 24 20 29 42 29S82 24 84 16L73 100C72 106 58 110 42 110S12 106 11 100Z" fill="url(#tra)" />
    <path d="M7 70 77 70 73 100C72 106 58 110 42 110S12 106 11 100Z" fill="url(#trb)" />
    <path d="M22 32C34 40 48 42 62 34 54 46 40 48 32 42ZM14 52C28 58 22 72 30 84M60 56C52 66 62 76 52 88" fill="#efefef" opacity={0.6} />
    <path d="M0 16C2 24 20 29 42 29S82 24 84 16" fill="none" stroke="#f5f1f9" strokeWidth={1.2} />
    <path d="M0 16C2 9 20 5 24 5M60 5C76 8 83 12 84 16" fill="none" stroke="#d9c8ef" strokeWidth={1} />
  </svg>
);

const apps: [React.FC, boolean][] = [
  [Finder, true], [Settings, false], [Launchpad, false], [Safari, true], [Spotify, false], [Discord, false],
  [Clock, false], [WhatsApp, false], [Notion, false], [Chrome, true], [Notes, false], [VSCode, false],
];
const tools: React.FC[] = [TextEdit, PythonLauncher, Anaconda, Spyder, Terminal];

const menus: [string, number][] = [
  ["Dosya", 117], ["Düzen", 117], ["Görüntü", 141], ["Geçmiş", 131], ["Yer İşaretleri", 192], ["Pencere", 139], ["Yardım", 90],
];

const stroke = { fill: "none", stroke: "currentColor", strokeLinecap: "round" as const, strokeLinejoin: "round" as const };

export default function App() {
  return (
    <Desktop>
      <Global />
      <MenuBar>
        <MenuGroup>
          <AppleSlot><FaApple /></AppleSlot>
          <MenuItem $w={118} $bold $ls={-0.5}>Safari</MenuItem>
          {menus.map(([t, w]) => <MenuItem key={t} $w={w}>{t}</MenuItem>)}
        </MenuGroup>
        <Tray>
          <TrayItem $w={73}>
            <svg width={32} height={30} viewBox="0 0 32 30" {...stroke} strokeWidth={2.1}>
              <path d="M8 27A14.5 14.5 0 1 1 24 27M9.5 22.5A10.5 10.5 0 1 1 22.5 22.5M11.8 18.8A6.3 6.3 0 1 1 20.2 18.8" />
              <circle cx={16} cy={14.5} r={2} fill="currentColor" />
              <path d="M16 19V27" strokeWidth={3.4} />
            </svg>
          </TrayItem>
          <TrayItem $w={72}>
            <svg width={30} height={28} viewBox="0 0 30 28" {...stroke} strokeWidth={2.2}>
              <path d="M3.5 14A12.5 12.5 0 1 1 7 22.5M15.5 7V14.5L19 20" />
              <path d="M0 12H7L3.5 17Z" fill="currentColor" strokeWidth={0.5} />
            </svg>
          </TrayItem>
          <TrayItem $w={67}>
            <svg width={28} height={28} viewBox="0 0 28 28" {...stroke} stroke="#4a3e48" strokeWidth={2.4}>
              <circle cx={14} cy={14} r={12.8} /><path d="M11 8.5 19.5 14 11 19.5Z" fill="#4a3e48" strokeWidth={1} />
            </svg>
          </TrayItem>
          <TrayItem $w={74}>
            <svg width={33} height={28} viewBox="0 0 33 28">
              <rect x={1} y={1} width={31} height={22} rx={2} fill="#bfaabf" stroke="#463c45" strokeWidth={2.2} />
              <path d="M13 24H20V26H22V28H11V26H13Z" fill="#463c45" />
            </svg>
          </TrayItem>
          <TrayItem $w={74}>
            <svg width={34} height={26} viewBox="0 0 34 26" fill="none" stroke="#231c22" strokeWidth={4.2}>
              <path d="M1.8 9.8A21.5 21.5 0 0 1 32.2 9.8" /><path d="M7.8 15.8A13 13 0 0 1 26.2 15.8" />
              <path d="M17 25 11.8 19.7A7.5 7.5 0 0 1 22.2 19.7Z" fill="#231c22" stroke="none" />
            </svg>
          </TrayItem>
          <TrayItem $w={71}>
            <svg width={35} height={24} viewBox="0 0 35 24" fill="none" stroke="#bda9bd" strokeWidth={2}>
              <rect x={11} y={1.5} width={23} height={21} rx={3} />
              <path d="M0 3.2H5.5M0 12H5.5M0 20.8H5.5" strokeWidth={5} />
            </svg>
          </TrayItem>
          <TrayItem $w={57}><TrayText $size={22.5} $ls={-0.3}>%42</TrayText></TrayItem>
          <TrayItem $w={87}>
            <svg width={51} height={26} viewBox="0 0 51 26">
              <rect x={1} y={2} width={44} height={21.5} rx={6} fill="none" stroke="#8d7e8d" strokeWidth={1.8} />
              <path d="M48 9Q51 12.5 48 17Z" fill="#8d7e8d" />
              <path d="M7 5H22L14 16H19L16.5 20.5H7Q4 20.5 4 17.5V8Q4 5 7 5Z" fill="#231c22" />
              <path d="M27 0 14.5 14.5H21.5L18.5 25.5 31 10.5H24Z" fill="#231c22" stroke="#ebcce5" strokeWidth={1.2} />
            </svg>
          </TrayItem>
          <TrayItem $w={66}>
            <svg width={27} height={26} viewBox="0 0 27 26" {...stroke} strokeWidth={2.8}>
              <circle cx={11.5} cy={11} r={9.4} /><path d="M18.5 18 24.5 24" strokeWidth={3.8} />
            </svg>
          </TrayItem>
          <TrayItem $w={64}>
            <svg width={28} height={28} viewBox="0 0 28 28">
              <rect x={1.2} y={1.8} width={25.6} height={10.5} rx={5.2} fill="none" stroke="#463b46" strokeWidth={2.2} />
              <circle cx={6.5} cy={7} r={3} fill="#463b46" />
              <rect x={0} y={16} width={28} height={11.5} rx={5.7} fill="#463b46" /><circle cx={22.5} cy={21.7} r={3.4} fill="#ecc6e2" />
            </svg>
          </TrayItem>
          <TrayItem $w={63}>
            <svg width={28} height={28} viewBox="0 0 28 28">
              <defs>
                <radialGradient id="siri"><stop offset="0" stopColor="#fff" /><stop offset=".35" stopColor="#d9dcf5" stopOpacity=".9" /><stop offset="1" stopColor="#fff" stopOpacity="0" /></radialGradient>
                <linearGradient id="siri2" x1="0" y1=".4" x2="1" y2=".6"><stop offset="0" stopColor="#d94a86" /><stop offset=".45" stopColor="#7a78b8" /><stop offset="1" stopColor="#3a8fd0" /></linearGradient>
              </defs>
              <circle cx={14} cy={14} r={14} fill="url(#siri2)" />
              <path d="M6 3A14 14 0 0 1 27 12C22 14 10 10 6 3Z" fill="#3f9e88" />
              <path d="M6 24A14 14 0 0 0 25 22C18 18 10 19 6 24Z" fill="#2f6fb0" />
              <circle cx={14} cy={14.5} r={8} fill="url(#siri)" />
            </svg>
          </TrayItem>
          <TrayItem $w={180}><TrayText $size={25.4} $ls={0.15}>1 Ağustos Sal</TrayText></TrayItem>
          <TrayItem $w={80}><TrayText $size={25.4} $ls={0.8}>10:22</TrayText></TrayItem>
        </Tray>
      </MenuBar>
      <TopEdge />
      <NightShade />
      <BackWindow><BackFoot /></BackWindow>
      <BackMarks width={1796} height={1580} viewBox="1084 60 1796 1580">
        <rect x={2874} y={462} width={6} height={42} fill="#3c495b" />
        <path d="M2875 246h5M2875 251h5M2875 256h5M2875 554h5M2875 559h5M2875 564h5" stroke="#c6ccd0" strokeWidth={2} />
        <path d="M2874 292h6M2874 457h6M2874 601h6M2874 1537h6" stroke="#3c4955" strokeWidth={2} />
        <path d="M2875 162q0-3 5-3v6q-5 0-5-3" fill="#d6d3d0" />
        <path d="M2880 481q-5 2-5 5t5 4M2880 608q-4-1-6-4M2874 748h4v12h-4M2876 858h4M2876 865h4M2880 890q-5-2-5-6t5-2M2874 1033h4v12h-4M2876 1144h4M2876 1151h4M2874 1220h5v9h-5M2874 1238h5v8h-5M2874 1254h5M2880 1274q-5 0-5 6M2880 1302q-5 0-5 6M2874 1352l5 6-5 6M2876 1438h4" fill="none" stroke="#c6ccd0" strokeWidth={2} />
        <path d="M1420 1628l2 4M1444 1632l3-4M1592 1632l3-4M1732 1628v4M1920 1628l2 4M1985 1632l2-4M2148 1632l3-4M2353 1628v4" fill="none" stroke="#b9bdc0" strokeWidth={2} />
      </BackMarks>
      <Window>
        <Toolbar>
          <ToolLeft>
            <Lights>
              <Light $c="#ed6a5f" $b="#d5574c" /><Light $c="#f5bf4f" $b="#d8a038" /><Light $c="#61c655" $b="#4fa73f" />
            </Lights>
            <Raised $by={3} width={39} height={30} viewBox="0 0 39 30" {...stroke} strokeWidth={2.4}>
              <rect x={1.2} y={1.2} width={36.6} height={27.6} rx={4} /><path d="M14 1.2V28.8" />
              <path d="M5.5 7.5H10M5.5 12H10M5.5 16.5H10" strokeWidth={1.8} />
            </Raised>
            <ToolDivider />
            <Chevron w={15} c="#8c8c8c" s={2.2} />
            <BackIcon width={17} height={28} viewBox="0 0 17 28" {...stroke} strokeWidth={2.8}>
              <path d="M15 1.5 2 14 15 26.5" />
            </BackIcon>
          </ToolLeft>
          <Address>
            <Host>
              <svg width={32} height={32} viewBox="0 0 32 32">
                <circle cx={16} cy={16} r={16} fill="#262730" />
                <path d="M5 11 16 15.5 26.5 11.5 23.5 21.5H8.5Z" fill="#c7c7cb" />
                <path d="M16 9.5 20 14 16 19 12 14Z" fill="#e3e3e6" />
                <path d="M5 11 23 21.5H8.5Z" fill="#fff" />
              </svg>
              localhost
            </Host>
            <More>
              <svg width={31} height={31} viewBox="0 0 31 31">
                <circle cx={15.5} cy={14.5} r={15.5} fill="#6b6b6b" />
                {[8.5, 15.5, 22.5].map((x) => <circle key={x} cx={x} cy={14.5} r={2.2} fill="#d7d7d7" />)}
              </svg>
            </More>
          </Address>
          <ToolRight>
            <ToolIcon $ml={0}>
              <svg width={34} height={34} viewBox="0 0 34 34" {...stroke} strokeWidth={2.4}>
                <circle cx={17} cy={16.500} r={15.7} /><path d="M17 9V24M11 18.500 17 24.500 23 18.500" />
              </svg>
            </ToolIcon>
            <ToolIcon $ml={43}>
              <Raised $by={5} width={30} height={38} viewBox="0 0 30 38" {...stroke} strokeWidth={2.4}>
                <path d="M10 13H5Q1.200 13 1.200 16.800V32.500Q1.200 36.500 5 36.500H25Q28.800 36.500 28.800 32.500V16.800Q28.800 13 25 13H20M15 24V2M9 7.500 15 1.500 21 7.500" />
              </Raised>
            </ToolIcon>
            <ToolIcon $ml={44}>
              <Raised $by={3} width={27} height={27} viewBox="0 0 27 27" {...stroke} strokeWidth={2.6}>
                <path d="M13.5 1V26M1 13.5H26" />
              </Raised>
            </ToolIcon>
            <ToolIcon $ml={45}>
              <Raised $by={3} width={35} height={35} viewBox="0 0 35 35" {...stroke} strokeWidth={2.4}>
                <rect x={9} y={9.5} width={24.8} height={24.3} rx={4} />
                <path d="M9 26.5H5.5Q1.200 26.5 1.200 22V5.5Q1.200 1.200 5.5 1.200H22Q26.5 1.200 26.5 5.5V9" />
              </Raised>
            </ToolIcon>
          </ToolRight>
        </Toolbar>
        <Rainbow />
        <Page>
          <Sidebar>
            <CloseRow>
              <svg width={13} height={13} viewBox="0 0 13 13" {...stroke} strokeWidth={2}><path d="M1 1 12 12M12 1 1 12" /></svg>
            </CloseRow>
            <Label $h={32} $gap={4}>Aggregate or Individual Video</Label>
            <Select $bg="#fff" $pr={18}>Bireysel Video Analizi<Chevron /></Select>
          </Sidebar>
          <Main>
            <Column>
              <Label $h={28} $gap={18}>Bireysel Video Performansı</Label>
              <Label $h={28} $gap={6}>Video Seç:</Label>
              <Select $bg="#f0f2f6" $pr={18}>Should You Be Excited About Web 3? (As a Data Scientist)<Chevron /></Select>
              <ChartSlot $mt={13}><BarChart /></ChartSlot>
              <ChartSlot $mt={10}><LineChart /></ChartSlot>
              <Footer>Made with <b>Streamlit</b></Footer>
            </Column>
            <Kebab>
              <svg width={6} height={18} viewBox="0 0 6 18" fill="#31333f">
                {[2, 8, 14].map((y) => <circle key={y} cx={3} cy={y} r={1.9} />)}
              </svg>
            </Kebab>
          </Main>
        </Page>
      </Window>
      <Dock>
        {apps.map(([C, on], i) => (
          <DockItem key={i} $w={126.9}><C />{on && <Dot />}</DockItem>
        ))}
        <DockRule $w={56.5} $x={29} />
        {tools.map((C, i) => (
          <DockItem key={i} $w={126.5}><C /><Dot /></DockItem>
        ))}
        <DockRule $w={57.5} $x={29} />
        <DockItem $w={127} $top={28.5}><TerminalThumb /><Tag>open ...</Tag></DockItem>
        <DockItem $w={127} $top={30}><NavigatorThumb /></DockItem>
        <DockItem $w={127} $top={10}><Trash /></DockItem>
      </Dock>
    </Desktop>
  );
}
